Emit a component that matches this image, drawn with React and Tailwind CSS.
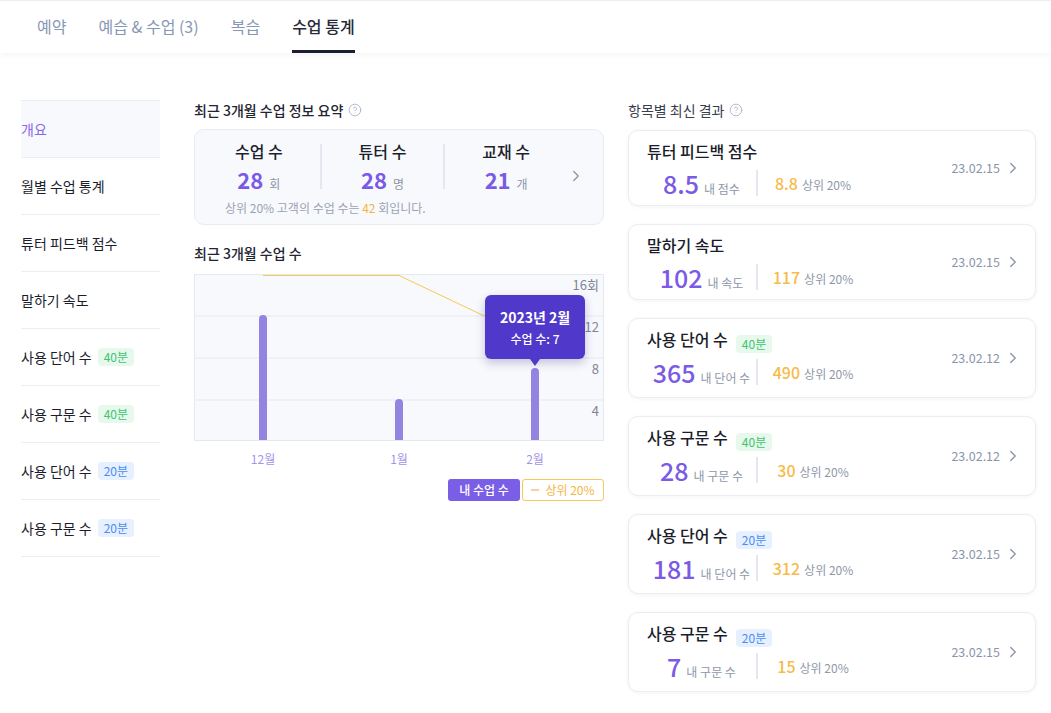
import { ChevronRight, CircleHelp } from 'lucide-react';

const FONT = { fontFamily: '"Noto Sans CJK KR", "Noto Sans", sans-serif' };

const tabs = [
  { label: '예약' },
  { label: '예습 & 수업 (3)' },
  { label: '복습' },
  { label: '수업 통계', active: true },
];

const sideItems = [
  { label: '개요', active: true },
  { label: '월별 수업 통계' },
  { label: '튜터 피드백 점수' },
  { label: '말하기 속도' },
  { label: '사용 단어 수', badge: '40분', tone: 'green' },
  { label: '사용 구문 수', badge: '40분', tone: 'green' },
  { label: '사용 단어 수', badge: '20분', tone: 'blue' },
  { label: '사용 구문 수', badge: '20분', tone: 'blue' },
];

const results = [
  { title: '튜터 피드백 점수', mine: '8.5', mineLabel: '내 점수', top: '8.8', date: '23.02.15' },
  { title: '말하기 속도', mine: '102', mineLabel: '내 속도', top: '117', date: '23.02.15' },
  { title: '사용 단어 수', badge: '40분', tone: 'green', mine: '365', mineLabel: '내 단어 수', top: '490', date: '23.02.12' },
  { title: '사용 구문 수', badge: '40분', tone: 'green', mine: '28', mineLabel: '내 구문 수', top: '30', date: '23.02.12' },
  { title: '사용 단어 수', badge: '20분', tone: 'blue', mine: '181', mineLabel: '내 단어 수', top: '312', date: '23.02.15' },
  { title: '사용 구문 수', badge: '20분', tone: 'blue', mine: '7', mineLabel: '내 구문 수', top: '15', date: '23.02.15' },
];

const Badge = ({ text, tone, className = '' }) => (
  <span
    className={`inline-flex h-[18px] shrink-0 items-center rounded-[4px] px-[6px] text-[12px] leading-none ${
      tone === 'green' ? 'bg-[#e7f8ed] text-[#3fc56f]' : 'bg-[#e6f0ff] text-[#4a8cf3]'
    } ${className}`}
  >
    {text}
  </span>
);

const Help = () => <CircleHelp size={14} strokeWidth={1.6} className="text-[#aeb8c9]" />;

const SummaryCol = ({ label, value, unit }) => (
  <div className="flex w-[124px] flex-col items-center">
    <div className="h-[22px] text-[16px] font-medium leading-[22px] text-[#1d1f2c]">{label}</div>
    <div className="mt-[3px] flex h-[28px] items-baseline gap-[6px]">
      <span className="text-[22px] font-bold leading-[28px] text-[#7a5ae6]">{value}</span>
      <span className="text-[12px] text-[#8d96a8]">{unit}</span>
    </div>
  </div>
);

const Chart = () => {
  const bars = [
    { x: 68, top: 40 },
    { x: 204, top: 124 },
    { x: 340, top: 93 },
  ];
  return (
    <div className="relative h-[167px] border border-[#e4e8ef] bg-[#f8f9fc]">
      <svg className="absolute inset-0" width="408" height="165">
        {[41, 83, 125].map((y) => (
          <line key={y} x1="0" x2="408" y1={y} y2={y} stroke="#e6e9f0" strokeWidth="1" />
        ))}
        {bars.map((b) => (
          <rect key={b.x} x={b.x - 4} y={b.top} width="8" height={165 - b.top + 4} rx="4" fill="#9384e2" />
        ))}
        <polyline points="68,0.5 204,0.5 340,65" fill="none" stroke="#f7c853" strokeWidth="1" />
      </svg>
      <div className="absolute right-[4px] top-[1px] text-[13px] leading-[18px] text-[#7d8596]">16회</div>
      <div className="absolute right-[4px] top-[43px] text-[13px] leading-[18px] text-[#7d8596]">12</div>
      <div className="absolute right-[4px] top-[85px] text-[13px] leading-[18px] text-[#7d8596]">8</div>
      <div className="absolute right-[4px] top-[127px] text-[13px] leading-[18px] text-[#7d8596]">4</div>

      {/* Tooltip */}
      <div className="absolute left-[290px] top-[20px] flex h-[64px] w-[100px] flex-col items-center justify-center rounded-[6px] bg-[#5039ca] text-white shadow-[0_4px_10px_rgba(40,30,120,0.25)]">
        <div className="text-[14px] font-bold leading-[20px]">2023년 2월</div>
        <div className="mt-[4px] text-[12px] font-medium leading-[16px]">수업 수: 7</div>
        <div className="absolute -bottom-[7px] left-1/2 h-0 w-0 -translate-x-1/2 border-x-[5px] border-t-[7px] border-x-transparent border-t-[#5039ca]" />
      </div>
    </div>
  );
};

export default function App() {
  return (
    <div className="min-h-screen bg-white" style={FONT}>
      {/* Top tabs */}
      <nav className="flex h-[53px] items-stretch gap-8 border-t border-[#eceef2] pl-[37px] shadow-[0_3px_5px_rgba(0,0,0,0.035)]">
        {tabs.map((t) => (
          <div
            key={t.label}
            className={`flex items-center border-b-[3px] pt-[1px] text-[16px] ${
              t.active ? 'border-[#1c1f33] font-medium text-[#262a3a]' : 'border-transparent text-[#8797b4]'
            }`}
          >
            {t.label}
          </div>
        ))}
      </nav>

      <main className="flex pl-[21px] pt-[47px]">
        {/* Sidebar */}
        <aside className="w-[139px] border-t border-[#eceef3]">
          {sideItems.map((s, i) => (
            <div
              key={i}
              className={`flex h-[57px] items-center gap-[6px] border-b border-[#eceef3] text-[14px] ${
                s.active ? 'bg-[#f8f9fc] text-[#8a68ee]' : 'text-[#1b1d2a]'
              }`}
            >
              <span>{s.label}</span>
              {s.badge && <Badge text={s.badge} tone={s.tone} />}
            </div>
          ))}
        </aside>

        {/* Middle column */}
        <section className="ml-[34px] w-[410px]">
          <div className="flex h-[20px] items-center gap-[5px] text-[14px] font-medium text-[#222431]">
            최근 3개월 수업 정보 요약 <Help />
          </div>
          <div className="mt-[9px] rounded-[10px] border border-[#e8ebf1] bg-[#f8f9fc] pt-[10px]">
            <div className="flex items-center pl-[3px]">
              <SummaryCol label="수업 수" value="28" unit="회" />
              <div className="h-[45px] w-[2px] bg-[#e2e7f0]" />
              <SummaryCol label="튜터 수" value="28" unit="명" />
              <div className="h-[45px] w-[2px] bg-[#e2e7f0]" />
              <SummaryCol label="교재 수" value="21" unit="개" />
              <div className="flex flex-1 justify-center pr-[18px] pt-[19px]">
                <ChevronRight size={18} strokeWidth={1.8} className="text-[#8b95aa]" />
              </div>
            </div>
            <div className="pb-[7px] pl-[30px] pt-[6px] text-[12px] leading-[18px] text-[#9aa3b4]">
              상위 20% 고객의 수업 수는 <span className="text-[#f6b43c]">42</span> 회입니다.
            </div>
          </div>

          <div className="mt-[18px] flex h-[20px] items-center text-[14px] font-medium text-[#222431]">
            최근 3개월 수업 수
          </div>
          <div className="mt-[11px]">
            <Chart />
          </div>
          <div className="flex pl-[1px] pt-[9px] text-[12px] leading-[18px] text-[#a395ea]">
            <div className="w-[136px] text-center">12월</div>
            <div className="w-[136px] text-center">1월</div>
            <div className="w-[136px] text-center">2월</div>
          </div>
          <div className="mt-[11px] flex justify-end gap-[2px]">
            <div className="flex h-[22px] w-[72px] items-center justify-center rounded-[3px] bg-[#7b5ee6] text-[12px] font-medium text-white">
              내 수업 수
            </div>
            <div className="flex h-[22px] w-[82px] items-center justify-center gap-[6px] rounded-[3px] border border-[#f6c85e] bg-white text-[12px] text-[#f3b63e]">
              <span className="h-[1.5px] w-[8px] bg-[#f6cfb2]" />
              상위 20%
            </div>
          </div>
        </section>

        {/* Right column */}
        <section className="ml-[24px] w-[408px]">
          <div className="flex h-[20px] items-center gap-[5px] text-[14px] text-[#3a3d4a]">
            항목별 최신 결과 <Help />
          </div>
          <div className="mt-[10px] flex flex-col gap-[18px]">
            {results.map((r, i) => (
              <div
                key={i}
                className="flex items-center rounded-[10px] border border-[#eaedf2] bg-white pl-[18px] pr-[13px] shadow-[0_1px_4px_rgba(30,40,80,0.05)]"
              >
                <div className={`flex-1 pt-[9px] ${r.badge ? 'pb-[9px]' : 'pb-[6px]'}`}>
                  <div className="flex h-[22px] items-start gap-[8px]">
                    <span className="text-[16px] font-medium leading-[22px] text-[#1b1d2a]">{r.title}</span>
                    {r.badge && <Badge text={r.badge} tone={r.tone} className="mt-[7px]" />}
                  </div>
                  <div className={`flex h-[32px] items-center ${r.badge ? 'mt-[6px]' : 'mt-[5px]'}`}>
                    <div className="flex w-[109px] items-baseline justify-center gap-[5px]">
                      <span className="text-[25px] font-medium leading-[32px] text-[#7a5ae6]">{r.mine}</span>
                      <span className="text-[12px] text-[#8e97a9]">{r.mineLabel}</span>
                    </div>
                    <div className="h-[26px] w-[2px] bg-[#e2e7f0]" />
                    <div className="flex w-[110px] items-baseline justify-center gap-[4px]">
                      <span className="text-[16px] font-medium text-[#f8ba48]">{r.top}</span>
                      <span className="text-[12px] text-[#8e97a9]">상위 20%</span>
                    </div>
                  </div>
                </div>
                <span className="text-[12.5px] text-[#8b95aa]">{r.date}</span>
                <ChevronRight size={18} strokeWidth={1.8} className="ml-[4px] text-[#8b95aa]" />
              </div>
            ))}
          </div>
        </section>
      </main>
    </div>
  );
}
